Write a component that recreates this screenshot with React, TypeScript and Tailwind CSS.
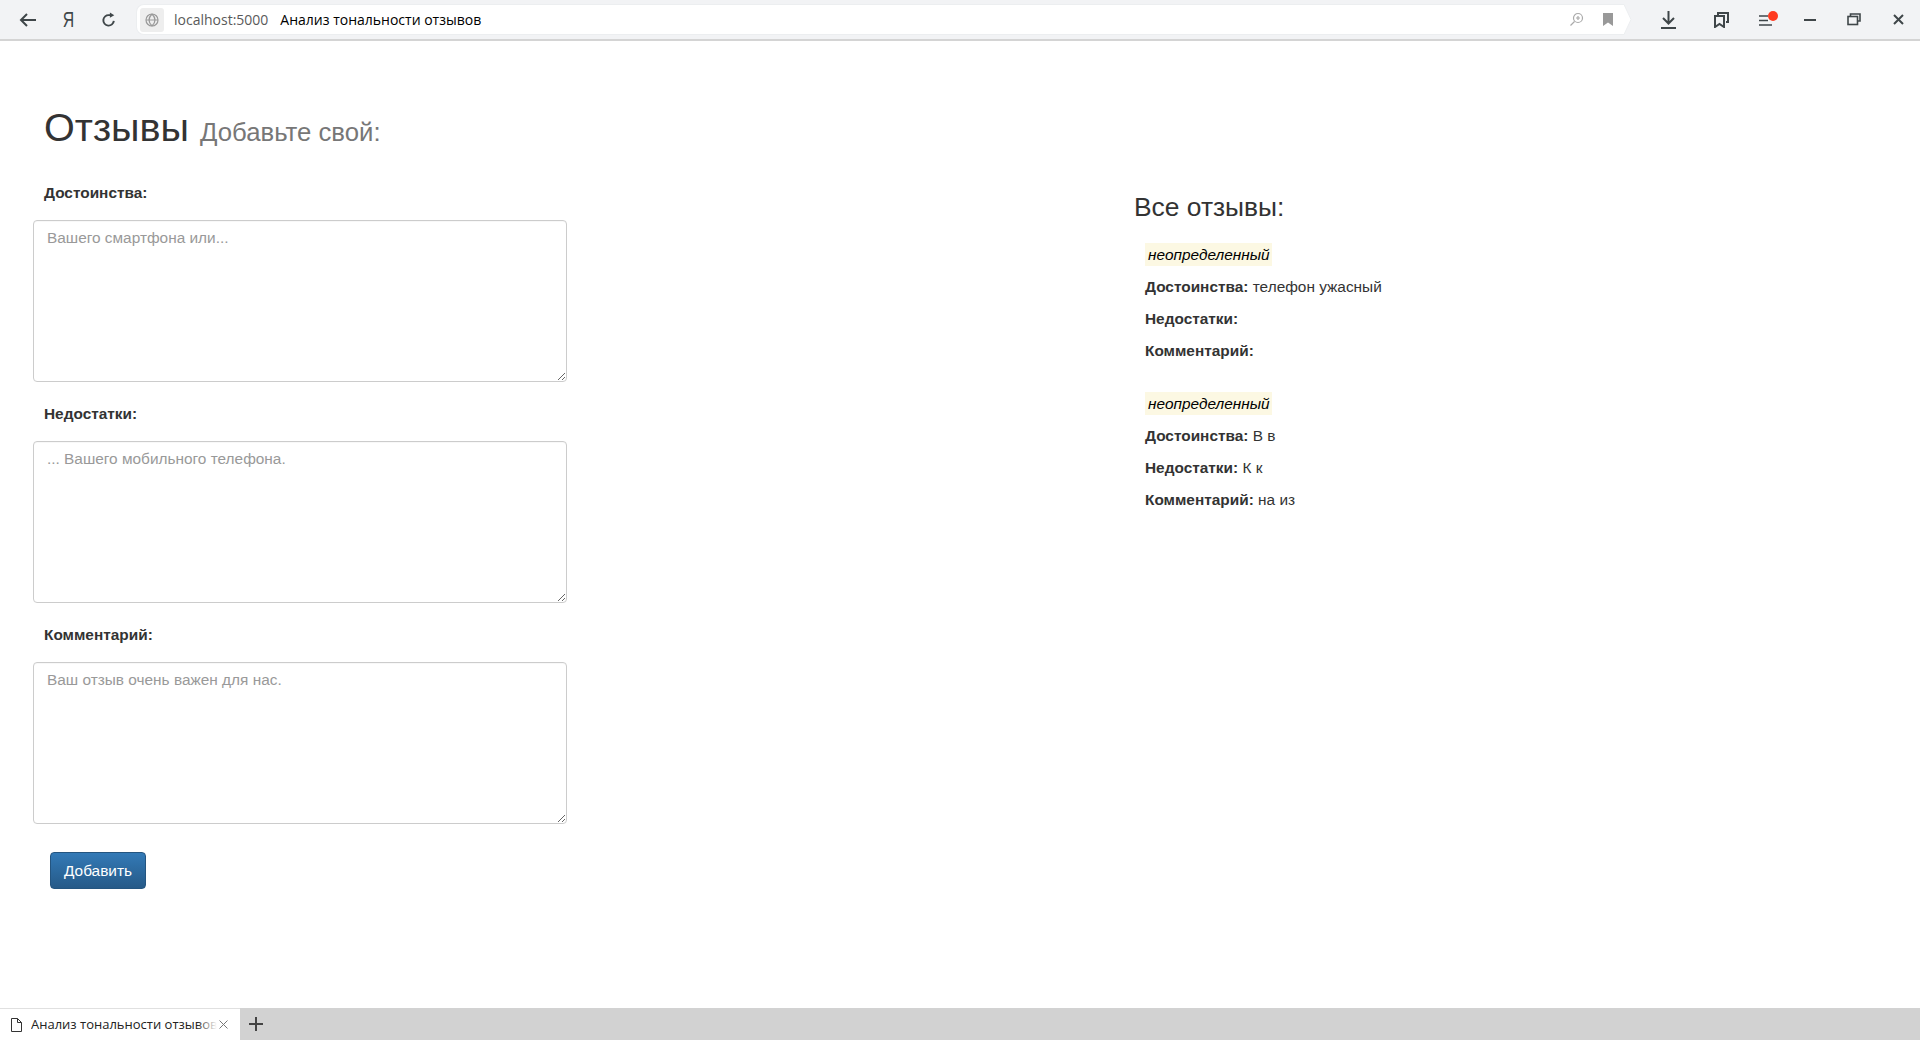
import React from "react";

function Field({ label, placeholder }: { label: string; placeholder: string }) {
  return (
    <div className="flex flex-col">
      <label className="ml-[11px] h-[20px] text-[15.4px] leading-[20px] font-bold text-[#333]">{label}</label>
      <textarea
        placeholder={placeholder}
        className="mt-[17px] h-[162px] w-[534px] rounded-[4px] border border-[#ccc] bg-white px-[13px] py-[6px] text-[15.4px] leading-[22px] text-[#555] shadow-[inset_0_1px_1px_rgba(0,0,0,0.03)] outline-none placeholder:text-[#999] resize"
      />
    </div>
  );
}

function Review({ a, b, c }: { a: string; b: string; c: string }) {
  return (
    <div className="flex flex-col text-[15.4px] leading-[20px] text-[#333]">
      <div className="h-[34px]">
        <span className="inline-block bg-[#fcf8e3] px-[3px] italic text-black h-[23px] leading-[23px] w-[127px] whitespace-nowrap">неопределенный</span>
      </div>
      <p className="h-[32px]"><b>Достоинства:</b> {a}</p>
      <p className="h-[32px]"><b>Недостатки:</b> {b}</p>
      <p className="h-[32px]"><b>Комментарий:</b> {c}</p>
    </div>
  );
}

export default function App() {
  return (
    <div className="flex h-[1040px] flex-col overflow-hidden bg-white font-['Liberation_Sans',Arial,sans-serif]">
      <header className="flex h-[41px] shrink-0 items-center border-b-2 border-[#d4d4d4] bg-[#f2f3f5] font-['Open_Sans','Liberation_Sans',sans-serif] text-[#3f4649]">
        <div className="flex w-[136px] shrink-0 items-center">
          <svg className="ml-[19px]" width="18" height="14" viewBox="0 0 18 14" fill="none" stroke="#3f4649" strokeWidth="2"><path d="M17 7H2M8 1 2 7l6 6" /></svg>
          <span className="ml-[24px] w-[12px] origin-center scale-x-[0.72] font-['Liberation_Sans',sans-serif] text-[22px] leading-none">Я</span>
          <svg className="ml-[29px]" width="14" height="15" viewBox="0 0 16 16" fill="none" stroke="#3f4649" strokeWidth="2.2"><path d="M13.5 9.5A6 6 0 1 1 8 3h2" /><path d="M9 0v6l5-3z" fill="#3f4649" stroke="none" /></svg>
        </div>
        <div className="flex h-[31px] w-[1487px] shrink-0 items-center rounded-l-[8px] border border-r-0 border-[#eceef0] bg-white pl-[3px] text-[14px]">
          <span className="flex h-[24px] w-[24px] items-center justify-center rounded-[3px] bg-[#eeeeee]">
            <svg width="14" height="14" viewBox="0 0 14 14" fill="none" stroke="#999" strokeWidth="1.2"><circle cx="7" cy="7" r="6" /><path d="M1 7h12M7 1c-4 4-4 8 0 12M7 1c4 4 4 8 0 12" /></svg>
          </span>
          <span className="ml-[10px] text-[#5a5a5a]">localhost:5000</span>
          <span className="ml-[12px] text-black">Анализ тональности отзывов</span>
          <span className="flex-1" />
          <svg width="15" height="15" viewBox="0 0 15 15" fill="none" stroke="#aaa" strokeWidth="1.2"><circle cx="9" cy="6" r="4.5" /><path d="M9 4v4M7 6h4M5.5 9.5 1.5 13.5" /></svg>
          <svg className="ml-[19px] mr-[10px]" width="10" height="13" viewBox="0 0 10 13" fill="#999"><path d="M0 0h10v13L5 9.5 0 13z" /></svg>
        </div>
        <svg className="-ml-px shrink-0" width="10" height="31" viewBox="0 0 10 31" fill="#fff" stroke="#eceef0"><path d="M0 0.5h2L9 15.5 2 30.5H0" /></svg>
        <div className="flex flex-1 items-center">
          <svg className="ml-[29px]" width="15" height="18" viewBox="0 0 15 18" fill="none" stroke="#3f4649" strokeWidth="2"><path d="M7.5 0v12M2 7l5.5 5.5L13 7M0 17h15" /></svg>
          <svg className="ml-[38px]" width="15" height="16" viewBox="0 0 15 16" fill="none" stroke="#3f4649" strokeWidth="2"><path d="M4 3V1h10v9h-2" /><path d="M1 4h9v11l-4.500-3L1 15z" /></svg>
          <div className="relative ml-[30px] h-[16px] w-[20px]">
            <svg className="absolute left-0 top-[3px]" width="14" height="11" viewBox="0 0 14 11" stroke="#3f4649" strokeWidth="1.5"><path d="M0 1h9M0 5.500h9M0 10h13" /></svg>
            <span className="absolute left-[9px] top-[-1px] h-[10px] w-[10px] rounded-full bg-[#ff3a1f]" />
          </div>
          <span className="ml-[25px] h-[2px] w-[12px] bg-[#3f4649]" />
          <svg className="ml-[31px]" width="14" height="13" viewBox="0 0 14 13" fill="none" stroke="#3f4649" strokeWidth="1.6"><path d="M3.500 3V1H13v7h-2.500" /><rect x="1" y="3.500" width="9.500" height="8" /></svg>
          <svg className="ml-[32px]" width="11" height="11" viewBox="0 0 11 11" stroke="#3f4649" strokeWidth="2"><path d="M1 1l9 9M10 1l-9 9" /></svg>
        </div>
      </header>

      <main className="flex min-h-0 flex-1">
        <section className="w-[1125px] shrink-0 pl-[33px] pt-[64px]">
          <h1 className="ml-[11px] h-[44px] whitespace-nowrap text-[39.6px] leading-[44px] font-normal text-[#333]">
            Отзывы <small className="text-[25.74px] leading-none text-[#777]">Добавьте свой:</small>
          </h1>
          <div className="mt-[34px] flex flex-col gap-[22px]">
            <Field label="Достоинства:" placeholder="Вашего смартфона или..." />
            <Field label="Недостатки:" placeholder="... Вашего мобильного телефона." />
            <Field label="Комментарий:" placeholder="Ваш отзыв очень важен для нас." />
          </div>
          <button className="ml-[17px] mt-[28px] h-[37px] w-[96px] rounded-[4px] border border-[#245580] bg-gradient-to-b from-[#337ab7] to-[#265a88] text-[15.4px] text-white">
            Добавить
          </button>
        </section>
        <section className="flex-1 pl-[9px] pt-[152px]">
          <h3 className="h-[29px] text-[26.4px] leading-[29px] font-normal text-[#333]">Все отзывы:</h3>
          <div className="mt-[21px] ml-[11px] flex flex-col gap-[19px]">
            <Review a="телефон ужасный" b="" c="" />
            <Review a="В в" b="К к" c="на из" />
          </div>
        </section>
      </main>

      <footer className="flex h-[32px] shrink-0 items-center bg-[#d2d2d2] font-['Open_Sans','Liberation_Sans',sans-serif]">
        <div className="flex h-full w-[240px] items-center border-t border-[#e0e0e0] bg-white pl-[11px]">
          <svg width="11" height="14" viewBox="0 0 11 14" fill="none" stroke="#333" strokeWidth="1"><path d="M.5.500h6l4 4v9H.5zM6.500.500v4h4" /></svg>
          <span className="relative ml-[9px] w-[186px] overflow-hidden whitespace-nowrap text-[13px] text-[#222]">
            Анализ тональности отзывов
            <span className="absolute right-0 top-0 h-full w-[20px] bg-gradient-to-r from-transparent to-white" />
          </span>
          <svg className="ml-[2px]" width="9" height="9" viewBox="0 0 9 9" stroke="#777" strokeWidth="1"><path d="M.5.500l8 8M8.500.500l-8 8" /></svg>
        </div>
        <svg className="ml-[9px]" width="14" height="14" viewBox="0 0 14 14" stroke="#444" strokeWidth="2"><path d="M7 0v14M0 7h14" /></svg>
      </footer>
    </div>
  );
}
